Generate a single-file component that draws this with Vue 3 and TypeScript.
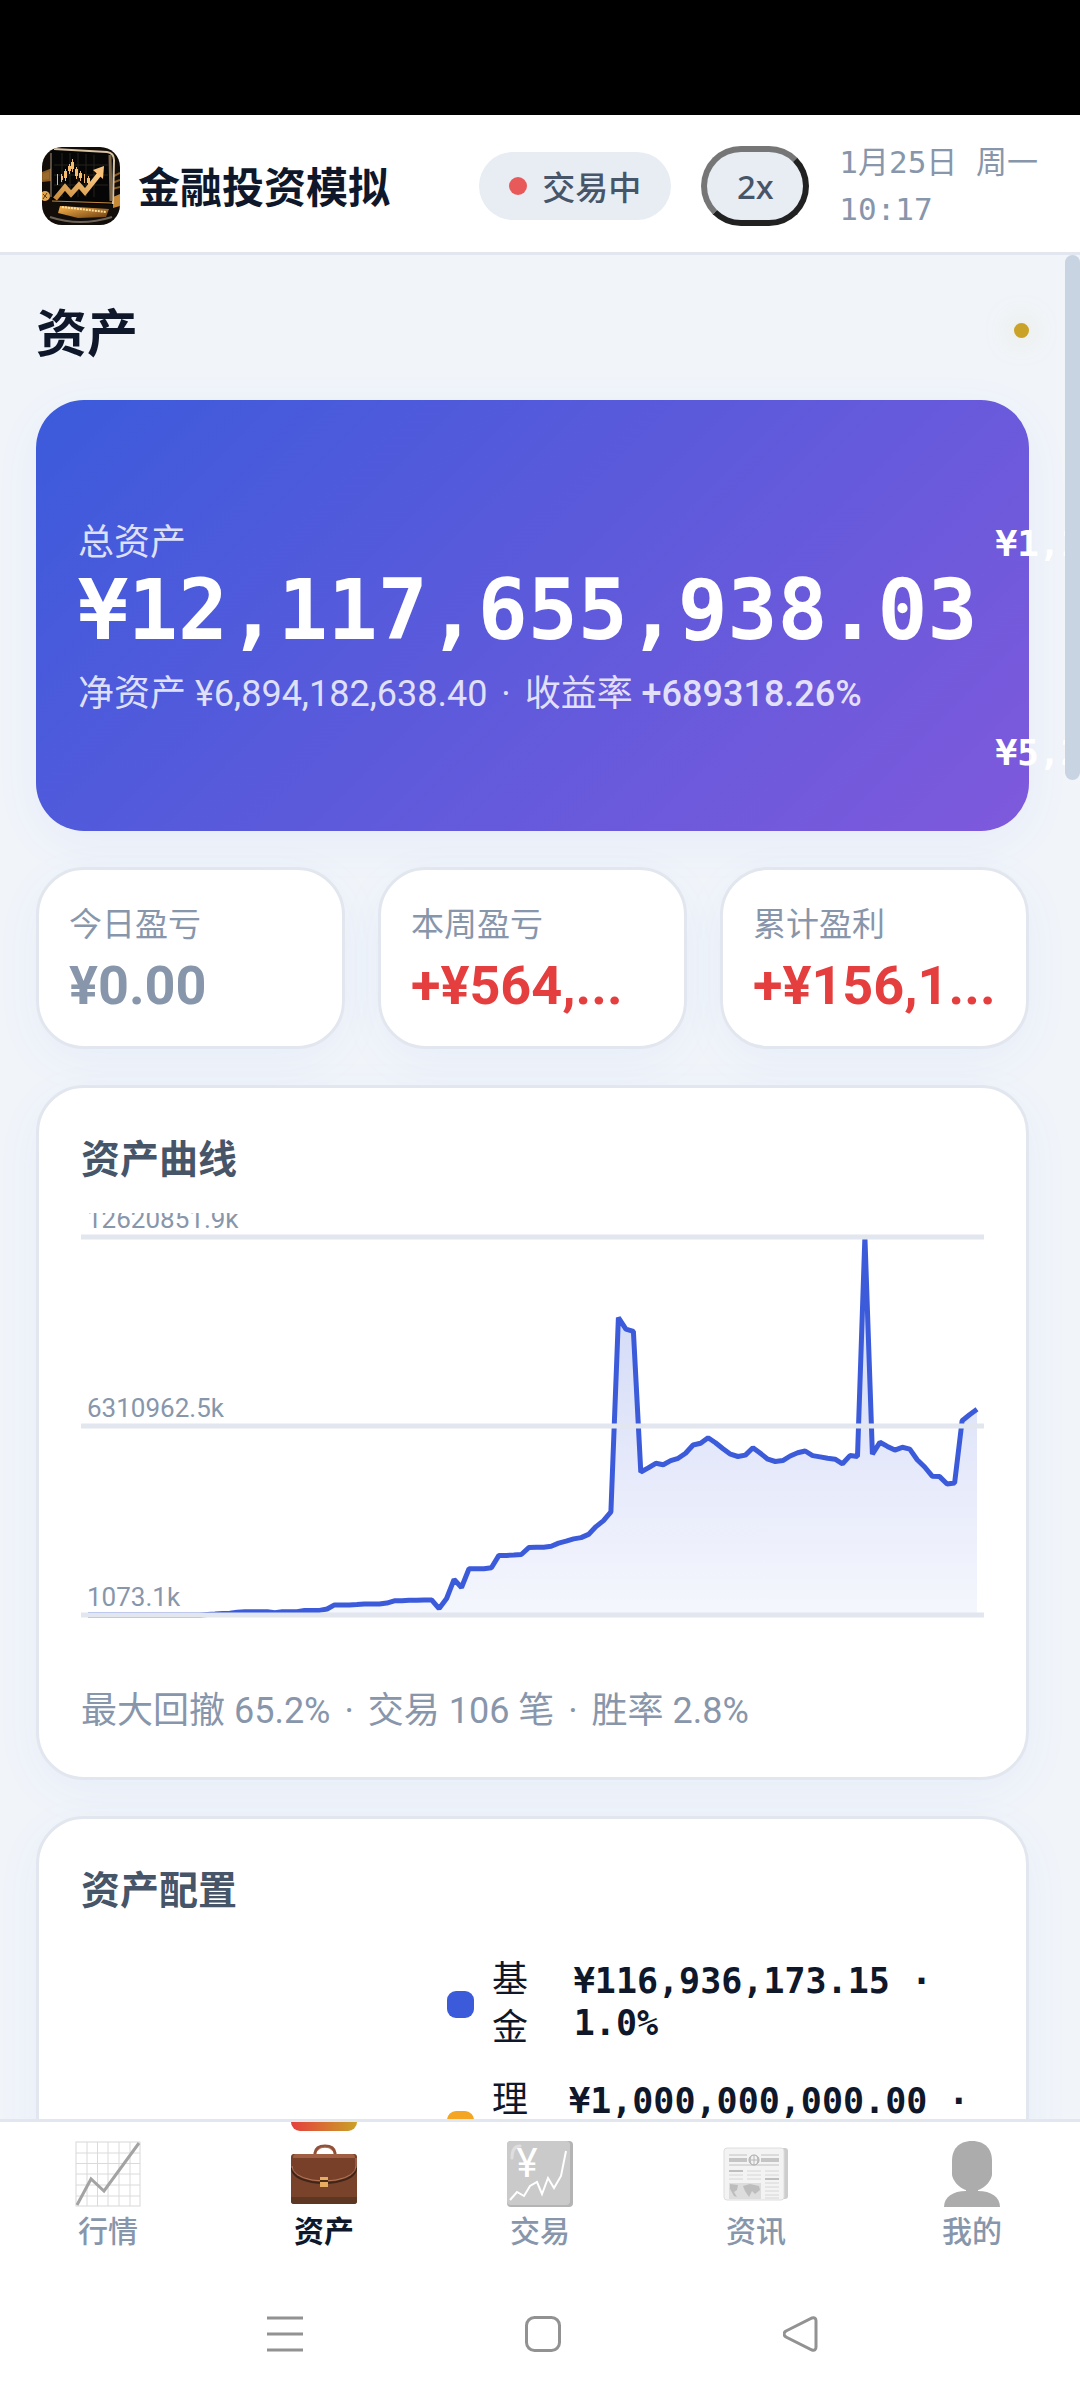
<script setup lang="ts">
import { computed } from 'vue'

interface Stat { label: string; value: string; tone: 'flat' | 'up' }
interface Holding { name: string; value: string; color: string }
interface Tab { id: string; label: string; active?: boolean }

const stats: Stat[] = [
  { label: '今日盈亏', value: '¥0.00', tone: 'flat' },
  { label: '本周盈亏', value: '+¥564,...', tone: 'up' },
  { label: '累计盈利', value: '+¥156,1...', tone: 'up' },
]

const holdings: Holding[] = [
  { name: '基金', value: '¥116,936,173.15 · 1.0%', color: '#3b5bdb' },
  { name: '理财', value: '¥1,000,000,000.00 · 8.3%', color: '#f5a524' },
]

const tabs: Tab[] = [
  { id: 'market', label: '行情' },
  { id: 'assets', label: '资产', active: true },
  { id: 'trade', label: '交易' },
  { id: 'news', label: '资讯' },
  { id: 'me', label: '我的' },
]

/* Equity samples, in units of one 825th of the axis range */
const equity: number[] = [
  0, 0, 0, 0, 0, 0, 0, 0, 0, 0, 0, 0, 0, 0, 0, 0, 1, 2, 3, 4,
  6, 7, 7, 7, 7, 5, 7, 7, 7, 10, 10, 10, 13, 22, 22, 22, 23, 24, 24, 24,
  26, 31, 31, 32, 32, 33, 33, 14, 36, 78, 60, 101, 101, 101, 103, 130, 130, 131, 132, 147,
  148, 148, 150, 157, 161, 166, 169, 176, 193, 206, 225, 649, 624, 619, 312, 321, 331, 328, 337, 342,
  353, 371, 375, 387, 376, 363, 351, 346, 349, 365, 353, 340, 335, 337, 347, 354, 358, 348, 345, 342,
  340, 330, 348, 346, 825, 351, 377, 368, 360, 366, 362, 339, 323, 303, 302, 286, 288, 424, 437, 449,
]

const gridLines = [
  { y: 24, label: '12620851.9k' },
  { y: 213, label: '6310962.5k' },
  { y: 402, label: '1073.1k' },
]

const line = computed(() =>
  equity
    .map((v, i) => `${(7 + (i * 889) / (equity.length - 1)).toFixed(1)},${(402 - (v * 378) / 825).toFixed(1)}`)
    .join(' '),
)
const area = computed(() => `7,402 ${line.value} 896,402`)
</script>

<template>
  <div class="app">
    <div class="status-strip"></div>

    <header class="topbar">
      <svg class="logo" viewBox="0 0 78 78" aria-hidden="true">
        <defs>
          <linearGradient id="gold" x1="0" y1="1" x2="1" y2="0">
            <stop offset="0" stop-color="#c98a3a" />
            <stop offset="1" stop-color="#ffd08a" />
          </linearGradient>
          <linearGradient id="base" x1="0" y1="0" x2="1" y2="1">
            <stop offset="0" stop-color="#ffb84d" />
            <stop offset="1" stop-color="#6b3d10" />
          </linearGradient>
          <clipPath id="logoClip"><rect width="78" height="78" rx="20" /></clipPath>
        </defs>
        <g clip-path="url(#logoClip)">
          <rect width="78" height="78" fill="#120d08" />
          <path d="M0 26l8-3v10l-8 1zM70 30l8-4M70 36l8-3M70 42l8-2" fill="#9a6a2c" stroke="#8a5b22" stroke-width="2" />
          <circle cx="3" cy="49" r="5" fill="#e0a650" />
          <path d="M1 47l4 4M5 46l-4 6" stroke="#5d3a10" />
          <path d="M71 50l7-3v12l-7 2z" fill="#c88935" />
          <path d="M18 59l49 3-3 8-28 1-20-5z" fill="url(#base)" />
          <path d="M20 60l44 5" stroke="#ffe0a0" stroke-width="2" stroke-dasharray="2 1" />
          <path d="M8 70q30 10 62 0" fill="none" stroke="#6c6257" stroke-width="2" />
          <path d="M11 2l54 3q7 1 7 8l-1 45-57-3q-5-1-5-6V6z" fill="#060606" />
          <path d="M12 2l53 3q7 1 7 8l-1 44" fill="none" stroke="#d9c3a3" stroke-width="2" />
          <path d="M68 8l1 46" stroke="#7d6548" stroke-width="3" />
          <path d="M9 6v44" stroke="#a8927a" />
          <path d="M10 54l60 2" stroke="#c58a3e" />
          <path d="M20 6v44M28 6v44M36 6v44M44 7v43M52 8v42M12 18h54M12 28h54M12 38h54" stroke="#26221c" />
          <path d="M15.500 27v11M19.500 27v8M23.500 22v12M27.500 17v10M30.500 12v13M34.500 20v12M38.500 24v10M42.500 27v9M46.500 29v9" stroke="#efb765" />
          <path d="M19 29h2v4h-2zM22 24h3v7h-3zM26 19h3v5h-3zM29 15h3v7h-3zM33 22h3v7h-3zM37 26h3v5h-3zM45 31h3v5h-3z" fill="#f5bd6c" />
          <path d="M13 52l10-12 6 7 8-9 6 7 16-20" fill="none" stroke="url(#gold)" stroke-width="5" />
          <path d="M51 23l11-4-1 13z" fill="#f8c27a" />
        </g>
      </svg>
      <h1 class="brand">金融投资模拟</h1>
      <div class="market"><i class="live"></i>交易中</div>
      <button class="speed" type="button">2x</button>
      <time class="clock"><span>1月25日 周一</span><span>10:17</span></time>
    </header>

    <main class="content">
      <div class="thumb"></div>

      <div class="page-head">
        <h2>资产</h2>
        <i class="pulse"></i>
      </div>

      <section class="hero">
        <div class="hero-main">
          <p class="hero-label">总资产</p>
          <p class="hero-total">¥12,117,655,938.03</p>
          <p class="hero-sub">净资产 ¥6,894,182,638.40 <span class="sep">·</span> 收益率 <b>+689318.26%</b></p>
        </div>
        <div class="hero-side">
          <p>¥1,116,936,173.15</p>
          <p>¥5,223,473,299.63</p>
        </div>
      </section>

      <section class="stats">
        <div v-for="s in stats" :key="s.label" class="card stat">
          <p class="stat-label">{{ s.label }}</p>
          <p class="stat-value" :class="s.tone">{{ s.value }}</p>
        </div>
      </section>

      <section class="card panel">
        <h3>资产曲线</h3>
        <svg class="chart" viewBox="0 0 903 448" role="img" aria-label="资产曲线">
          <defs>
            <linearGradient id="fill" gradientUnits="userSpaceOnUse" x1="0" y1="24" x2="0" y2="402">
              <stop offset="0" stop-color="#3b5bdb" stop-opacity="0.26" />
              <stop offset="1" stop-color="#3b5bdb" stop-opacity="0.05" />
            </linearGradient>
          </defs>
          <polygon :points="area" fill="url(#fill)" />
          <polyline :points="line" fill="none" stroke="#3b5bdb" stroke-width="5" stroke-linejoin="bevel" />
          <g v-for="g in gridLines" :key="g.y">
            <line x1="0" :y1="g.y" x2="903" :y2="g.y" stroke="#e2e6ef" stroke-width="5" />
            <text class="axis" x="6" :y="g.y - 9">{{ g.label }}</text>
          </g>
        </svg>
        <p class="note">最大回撤 65.2% <span class="sep">·</span> 交易 106 笔 <span class="sep">·</span> 胜率 2.8%</p>
      </section>

      <section class="card panel">
        <h3>资产配置</h3>
        <div class="allocation">
          <div class="donut"></div>
          <ul class="legend">
            <li v-for="h in holdings" :key="h.name">
              <i class="swatch" :style="{ background: h.color }"></i>
              <span class="holding">{{ h.name }}</span>
              <b class="amount">{{ h.value }}</b>
            </li>
          </ul>
        </div>
      </section>
    </main>

    <nav class="tabs">
      <a v-for="t in tabs" :key="t.id" href="#" :class="{ active: t.active }">
        <svg v-if="t.id === 'market'" viewBox="0 0 66 66" aria-hidden="true">
          <rect x="1" y="1" width="64" height="64" fill="#fff" stroke="#d8d8d8" />
          <path d="M12 1v64M22.500 1v64M33 1v64M44 1v64M55 1v64M1 12h64M1 22.500h64M1 33h64M1 44h64M1 55h64" stroke="#dadada" />
          <path d="M2 64L16 38l13 12L64 2" fill="none" stroke="#a3a3a3" stroke-width="3" />
        </svg>
        <svg v-else-if="t.id === 'assets'" viewBox="0 0 66 66" aria-hidden="true">
          <path d="M24 15v-3q1-7 10-7t10 7v3" fill="none" stroke="#8f5139" stroke-width="3" />
          <path d="M26 10q3-4 8-4t8 4" fill="none" stroke="#b06e50" />
          <rect y="13" width="66" height="50" rx="3" fill="#79422a" />
          <path d="M0 56h66v4q0 3-3 3H3q-3 0-3-3z" fill="#5d3721" />
          <path d="M1 16q0-3 3-3h58q3 0 3 3v10q0 10-20 14-12 2-24 0Q1 36 1 26z" fill="#784029" />
          <path d="M2 17q0-4 3-4h56q3 0 3 4z" fill="#a05f43" />
          <path d="M1 27q0 10 20 14 12 2 24 0 20-4 20-14" fill="none" stroke="#3f2417" stroke-width="2" />
          <path d="M1 25q0 10 20 14 12 2 24 0 20-4 20-14V17" fill="none" stroke="#b5775a" />
          <path d="M29 36h8v10h-8z" fill="#e8ab62" />
          <path d="M29 40h8" stroke="#4a2b1a" stroke-width="2" />
        </svg>
        <svg v-else-if="t.id === 'trade'" viewBox="0 0 66 66" aria-hidden="true">
          <rect width="66" height="66" rx="4" fill="#b4b4b4" />
          <rect width="63" height="64" rx="4" fill="#cacaca" />
          <path d="M5 17q0-12 8-12" fill="none" stroke="#dedede" stroke-width="3" stroke-linecap="round" />
          <text x="20" y="36" text-anchor="middle" class="yen">¥</text>
          <path d="M3 59l7-8 7 4 6-10 7-4 5 12 6-16 6 10 7-12 5-25" fill="none" stroke="#fff" stroke-width="2" />
        </svg>
        <svg v-else-if="t.id === 'news'" viewBox="0 0 66 66" aria-hidden="true">
          <rect x="4" y="7" width="61" height="51" rx="3" fill="#cdcdcd" />
          <rect x="1" y="7" width="60" height="52" rx="3" fill="#f3f3f3" stroke="#dedede" />
          <path d="M6 14h18M38 14h18M6 24h50" stroke="#c2c2c2" />
          <path d="M6 19h18M38 19h18" stroke="#c5c5c5" stroke-width="4" />
          <circle cx="31" cy="19" r="5" fill="#f3f3f3" stroke="#a8a8a8" />
          <path d="M26 19h10M31 14v10M28 15q-2 4 0 8M34 15q2 4 0 8" fill="none" stroke="#b6b6b6" />
          <path d="M6 30h14M42 38h14" stroke="#bfbfbf" stroke-width="2" />
          <path d="M24 30h14M42 30h14M6 34h14M24 34h14M42 34h14M6 38h14M24 38h14M42 42h14M42 46h14M42 50h14M42 54h14M42 57h14" stroke="#d6d6d6" />
          <rect x="6" y="42" width="32" height="16" fill="#dddddd" />
          <path d="M7 43l8 1-1 5-3 2 3 5-3-1-4-7zM20 45l7-2 9 2 1 4-5 4-3-3-3 6-4-6z" fill="#bdbdbd" />
        </svg>
        <svg v-else viewBox="0 0 66 66" aria-hidden="true">
          <path d="M33 0c14 0 20 9 20 20v13c0 6-8 17-20 17S13 39 13 33V20C13 9 19 0 33 0z" fill="#acacac" />
          <path d="M27 47h12v5H27z" fill="#acacac" />
          <path d="M5 66c0-10 9-16 22-16h12c13 0 22 6 22 16z" fill="#acacac" />
        </svg>
        <span>{{ t.label }}</span>
      </a>
    </nav>

    <footer class="system">
      <svg viewBox="0 0 36 36" aria-hidden="true"><path d="M0 2h36M0 18h36M0 34h36" stroke="#929292" stroke-width="3" /></svg>
      <svg viewBox="0 0 36 36" aria-hidden="true"><rect x="1.500" y="1.500" width="33" height="33" rx="8" fill="none" stroke="#929292" stroke-width="3" /></svg>
      <svg viewBox="0 0 36 36" aria-hidden="true"><path d="M3 15L29 2q4-1 4 3v26q0 4-4 3L3 21q-4-3 0-6z" fill="none" stroke="#929292" stroke-width="3" /></svg>
    </footer>
  </div>
</template>

<style>
body {
  margin: 0;
  background: #f1f5fa;
}
</style>

<style scoped>
.app {
  display: flex;
  flex-direction: column;
  height: 100vh;
  overflow: hidden;
  color: #0f172a;
  font-family: Roboto, "Noto Sans CJK SC", sans-serif;
  font-size: 36px;
}
h1, h2, h3, p, ul {
  margin: 0;
  padding: 0;
}
.sep {
  margin: 0 5px;
}
.status-strip {
  flex: none;
  height: 115px;
  background: #000;
}
.topbar {
  flex: none;
  display: flex;
  align-items: center;
  height: 132px;
  padding: 5px 42px 0;
  background: #fff;
  border-bottom: 3px solid #e2e6ee;
}
.logo {
  flex: none;
  width: 78px;
  height: 78px;
  margin-right: 18px;
}
.brand {
  flex: 1;
  padding-top: 5px;
  font-size: 42px;
  line-height: 60px;
  white-space: nowrap;
}
.market {
  display: flex;
  align-items: center;
  gap: 15px;
  height: 68px;
  padding: 0 30px;
  border-radius: 34px;
  background: #e8edf4;
  color: #475569;
  font-size: 33px;
  font-weight: 500;
  white-space: nowrap;
}
.live {
  width: 18px;
  height: 18px;
  border-radius: 50%;
  background: #e85a5a;
}
.speed {
  box-sizing: border-box;
  width: 108px;
  height: 80px;
  margin: 0 30px;
  padding: 0;
  border: 6px solid;
  border-color: #767676 #212121 #212121 #767676;
  border-radius: 40px;
  background: #e8edf4;
  color: #475569;
  font: 500 33px "Noto Sans", "Noto Sans CJK SC", sans-serif;
}
.clock {
  flex: none;
  display: flex;
  flex-direction: column;
  color: #8896ab;
  font: 31px/47px "DejaVu Sans Mono", "Noto Sans CJK SC", monospace;
  white-space: nowrap;
}
.content {
  position: relative;
  flex: 1;
  min-height: 0;
  overflow: hidden;
  display: flex;
  flex-direction: column;
  gap: 36px;
  padding: 36px 51px 0 36px;
  background: #f1f5fa;
}
.content > * {
  flex: none;
}
.thumb {
  position: absolute;
  z-index: 1;
  top: 0;
  right: 0;
  width: 15px;
  height: 525px;
  border-radius: 8px;
  background: #c8d4e1;
}
.page-head {
  display: flex;
  align-items: center;
  justify-content: space-between;
  margin-bottom: -9px;
}
.page-head h2 {
  padding-top: 5px;
  font-size: 51px;
  line-height: 77px;
}
.pulse {
  width: 15px;
  height: 15px;
  margin-bottom: 4px;
  border-radius: 50%;
  background: #c9a227;
  box-shadow: 0 0 30px rgba(201, 162, 39, 0.4);
}
.hero {
  display: flex;
  align-items: center;
  gap: 18px;
  box-sizing: border-box;
  min-height: 431px;
  padding: 0 42px;
  border-radius: 48px;
  background: linear-gradient(135deg, #3b5bdb, #7f59dc);
  box-shadow: 0 12px 48px rgba(59, 91, 219, 0.06);
  color: #fff;
  white-space: nowrap;
}
.hero-main {
  flex: none;
  padding-top: 5px;
}
.hero-label, .hero-sub {
  line-height: 48px;
  color: rgba(255, 255, 255, 0.82);
}
.hero-total {
  margin-bottom: 15px;
  font: bold 83px/88px "DejaVu Sans Mono", monospace;
}
.hero-sub b {
  font-weight: 500;
}
.hero-side {
  display: flex;
  flex-direction: column;
  gap: 167px;
  width: 0;
  padding-top: 66px;
  font: bold 36px/42px "DejaVu Sans Mono", monospace;
}
.stats {
  display: grid;
  grid-template-columns: repeat(3, minmax(0, 1fr));
  gap: 33px;
}
.card {
  background: #fff;
  border: 3px solid #e2e6ee;
  border-radius: 48px;
  box-shadow: 0 12px 48px rgba(59, 91, 219, 0.05);
}
.stat {
  padding: 32px 30px 28px;
}
.stat-label {
  color: #8896ab;
  font-size: 33px;
  line-height: 46px;
}
.stat-value {
  margin-top: 6px;
  font-size: 54px;
  font-weight: 700;
  line-height: 64px;
  white-space: nowrap;
}
.flat {
  color: #8896ab;
}
.up {
  color: #e53e3e;
}
.panel {
  padding: 45px 42px 41px;
}
.panel h3 {
  color: #475569;
  font-size: 39px;
  line-height: 55px;
}
.chart {
  display: block;
  width: 100%;
  margin: 25px 0 26px;
}
.axis {
  fill: #8896ab;
  font-size: 26px;
}
.note {
  color: #8896ab;
  line-height: 49px;
}
.allocation {
  display: flex;
  gap: 36px;
  padding-top: 25px;
}
.donut {
  flex: none;
  width: 330px;
  height: 330px;
}
.legend {
  flex: 1;
  min-width: 0;
  display: flex;
  flex-direction: column;
  gap: 24px;
  margin-top: 12px;
  list-style: none;
}
.legend li {
  display: flex;
  align-items: center;
  gap: 18px;
}
.swatch {
  flex: none;
  width: 27px;
  height: 27px;
  border-radius: 9px;
}
.holding {
  line-height: 48px;
}
.amount {
  padding-bottom: 5px;
  font: bold 35px/42px "DejaVu Sans Mono", monospace;
}
.tabs {
  flex: none;
  display: grid;
  grid-template-columns: repeat(5, 1fr);
  background: #fff;
  border-top: 3px solid #e2e6ee;
}
.tabs a {
  position: relative;
  display: flex;
  flex-direction: column;
  align-items: center;
  gap: 4px;
  padding: 19px 0 15px;
  color: #8896ab;
  font-size: 30px;
  font-weight: 500;
  line-height: 42px;
  text-decoration: none;
}
.tabs svg {
  width: 66px;
  height: 66px;
}
.tabs .active {
  color: #0f172a;
  font-weight: 700;
}
.tabs .active::before {
  content: "";
  position: absolute;
  top: 0;
  width: 66px;
  height: 9px;
  border-radius: 0 0 9px 9px;
  background: linear-gradient(90deg, #e53e3e, #c9a227);
}
.yen {
  fill: #fff;
  font: 400 40px Roboto, sans-serif;
}
.system {
  flex: none;
  display: flex;
  align-items: center;
  justify-content: center;
  gap: 222px;
  height: 132px;
  padding-left: 6px;
  background: #fff;
}
.system svg {
  width: 36px;
  height: 36px;
}
</style>
